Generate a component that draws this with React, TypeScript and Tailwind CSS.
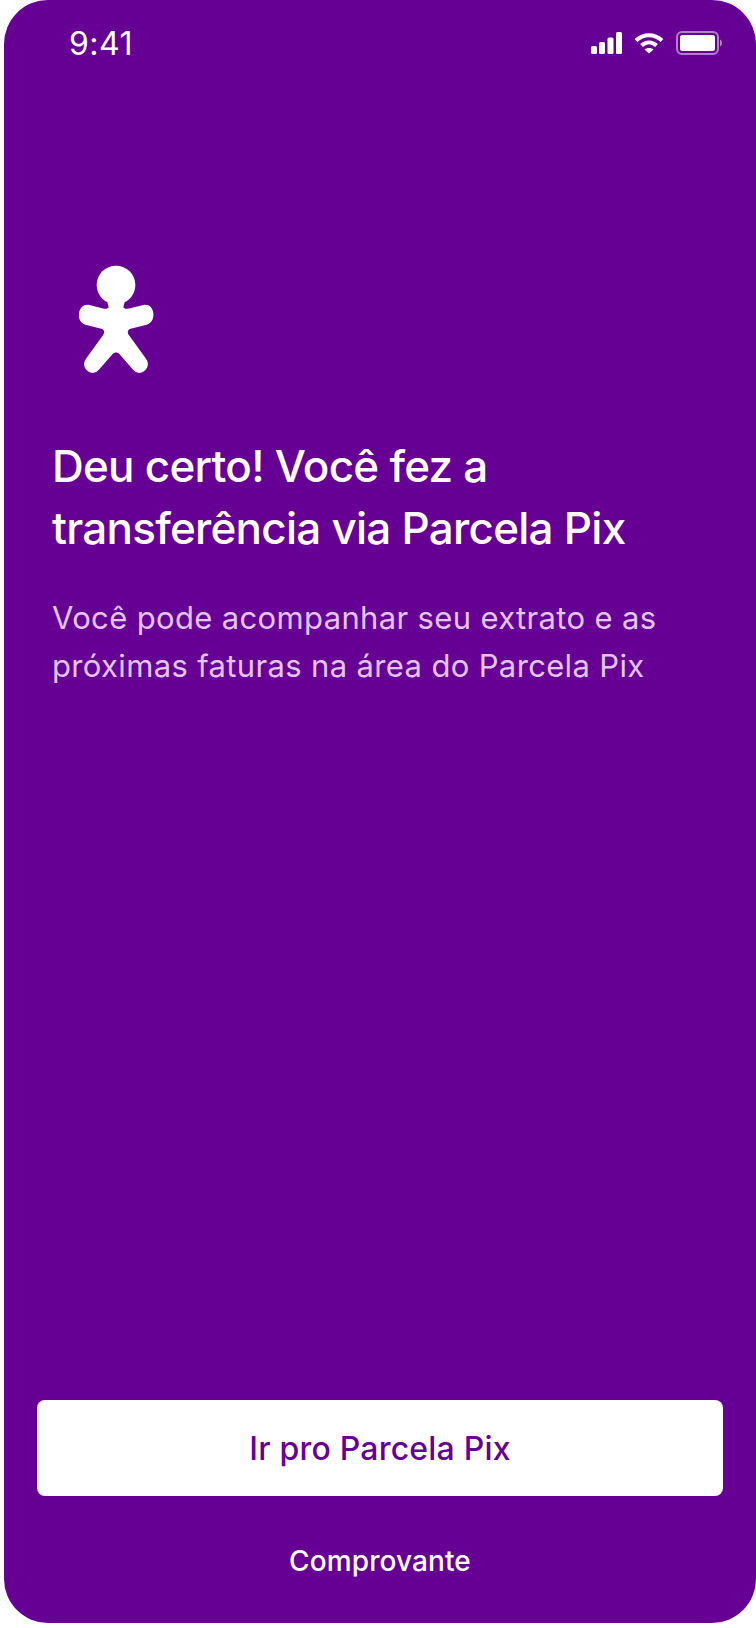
export default function App() {
  return (
    <div className="w-[756px] h-[1628px] bg-white font-['Inter',sans-serif]">
      <div className="ml-1 w-[752px] h-[1623px] rounded-[44px] bg-[#660095] flex flex-col text-white">
        <div className="h-[88px] flex items-start justify-between pl-[65px] pr-[34px] pt-[24px]">
          <span className="text-[32px] leading-[40px] tracking-[0.5px]">9:41</span>
          <div className="flex items-center gap-[12px] pt-[7px]">
            <svg width="31" height="22" viewBox="0 0 31 22" fill="#fff">
              <rect x="0" y="14" width="6" height="8" rx="1.5" />
              <rect x="8" y="10" width="6" height="12" rx="1.5" />
              <rect x="16.500" y="5.500" width="6" height="16.500" rx="1.5" />
              <rect x="25" y="0" width="6" height="22" rx="1.5" />
            </svg>
            <svg width="30" height="22" viewBox="0 0 30 22" fill="none" stroke="#fff" strokeWidth="4">
              <path d="M2 8.500C9.500 1.500 20.500 1.500 28 8.500" />
              <path d="M7.500 13.500C12 9.500 18 9.500 22.500 13.500" />
              <path d="M15 21.500L10.500 17.500C13 15.500 17 15.500 19.500 17.500Z" fill="#fff" stroke="none" />
            </svg>
            <svg width="46" height="24" viewBox="0 0 46 24" fill="none">
              <rect x="1" y="1" width="41" height="22" rx="5" stroke="#fff" strokeOpacity="0.5" strokeWidth="2" />
              <rect x="4" y="4" width="35" height="16" rx="2.500" fill="#fff" />
              <path d="M44 8.500C45.200 9 46 10.300 46 12C46 13.700 45.200 15 44 15.500Z" fill="#fff" fillOpacity="0.5" />
            </svg>
          </div>
        </div>
        <div className="mt-[162px] pl-[56px]">
          <svg width="110" height="130" viewBox="0 0 330 390" fill="#fff">
            <circle cx="168" cy="105" r="58" />
            <path d="M138 140L146 172C142 177 138 177 132 176L88 165C72 162 60 172 57 190C55 207 62 220 76 224L124 236C132 238 135 246 130 254L78 326C68 340 72 354 84 364C96 372 108 370 118 358L158 312C164 306 172 306 178 312L218 358C228 370 240 372 252 364C264 354 268 340 258 326L206 254C201 246 204 238 212 236L260 224C274 220 282 207 280 190C278 172 266 162 250 165L204 176C198 177 194 177 190 172L198 140Z" />
          </svg>
        </div>
        <h1 className="mt-[55px] pl-[48px] text-[44px] leading-[62px] font-[450] tracking-[-0.75px]">
          Deu certo! Você fez a<br />transferência via Parcela Pix
        </h1>
        <p className="mt-[35px] pl-[48px] text-[31px] leading-[48px] text-[#e3c6f0] tracking-[0.35px]">
          Você pode acompanhar seu extrato e as<br />próximas faturas na área do Parcela Pix
        </p>
        <div className="mt-auto px-[33px] pb-[42px] flex flex-col items-center">
          <button className="w-full h-[96px] pt-[2px] rounded-[8px] bg-white text-[#660095] text-[32px] font-[450] tracking-[0.2px]">Ir pro Parcela Pix</button>
          <button className="mt-[45px] h-[40px] text-[28px] leading-[40px] font-[450] tracking-[0.1px]">Comprovante</button>
        </div>
      </div>
    </div>
  );
}
